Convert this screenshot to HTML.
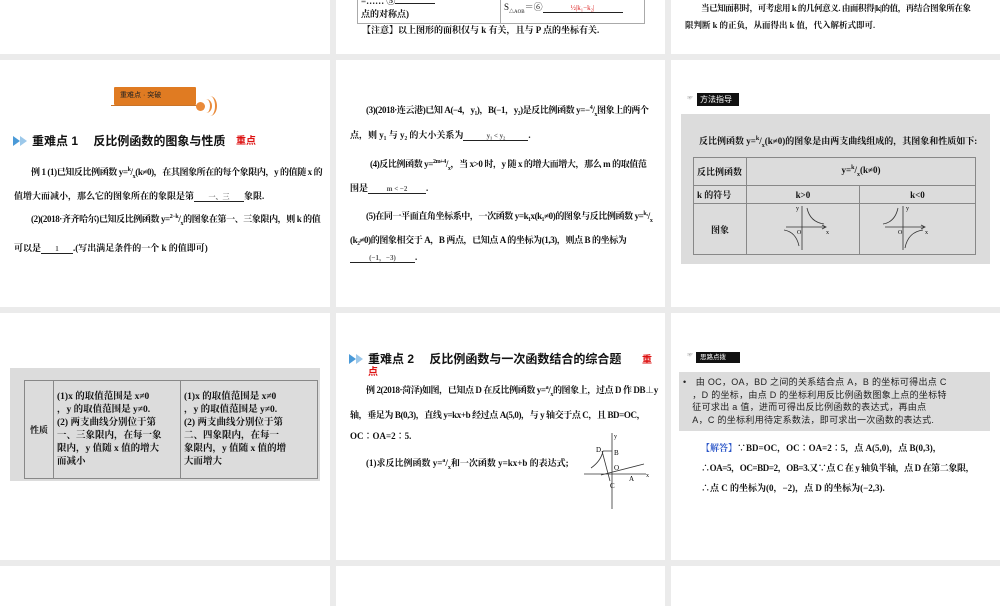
<!DOCTYPE html><html><head><meta charset="utf-8"><style>
body{margin:0;width:1000px;height:600px;background:#ebebeb;position:relative;overflow:hidden;font-family:"Liberation Serif","Noto Serif CJK SC",serif;color:#111}
.s{position:absolute;background:#fff;overflow:hidden}
.a{position:absolute;white-space:nowrap;font-size:9px;line-height:11px}
.l{letter-spacing:-0.4px}
.b{font-weight:bold}
.h{font-family:"Liberation Sans","Noto Sans CJK SC",sans-serif;font-weight:bold;font-size:12px;line-height:14px;letter-spacing:0}
.tri{position:absolute;width:0;height:0;border-top:5px solid transparent;border-bottom:5px solid transparent;border-left:7px solid #4a9ad8}
.u{display:inline-block;border-bottom:1px solid #222;text-align:center;font-size:7px;color:#555;vertical-align:baseline;line-height:8px}
table{border-collapse:collapse;position:absolute}
td{border:1px solid #888;font-size:9px;padding:0 3px}
sup,sub{font-size:6px}
</style></head><body>
<div class="s" style="left:0;top:0;width:330px;height:54px"></div>
<div class="s" style="left:336px;top:0;width:329px;height:54px">
 <div style="position:absolute;left:21px;top:-2px;width:286px;height:25px;border:1px solid #aaa;border-top:none"></div>
 <div style="position:absolute;left:164px;top:0;width:1px;height:23px;background:#aaa"></div>
 <div class="a b" style="left:25px;top:-4px">=…… ⑤<span class="u" style="width:40px"></span></div>
 <div class="a b" style="left:25px;top:9px">点的对称点)</div>
 <div class="a" style="left:168px;top:2px">S<sub style="font-size:5px">△AOB</sub>＝⑥<span class="u" style="width:80px;color:#d22">½|k₁−k₂|</span></div>
 <div class="a b" style="left:26px;top:25px">【注意】以上图形的面积仅与 k 有关，且与 P 点的坐标有关.</div>
</div>
<div class="s" style="left:671px;top:0;width:329px;height:54px">
 <div class="a b l" style="left:30px;top:3px;font-size:8.5px">当已知面积时，可考虑用 k 的几何意义. 由面积得|k|的值，再结合图象所在象</div>
 <div class="a b" style="left:14px;top:20px;font-size:8.5px">限判断 k 的正负，从而得出 k 值，代入解析式即可.</div>
</div>
<div class="s" style="left:0;top:60px;width:330px;height:247px">
 <div style="position:absolute;left:114px;top:27px;width:82px;height:18px;background:#e07b22;border-radius:1px"></div>
 <div class="a" style="left:120px;top:30px;font-size:7px;color:#222;font-family:'Liberation Sans','Noto Sans CJK SC',sans-serif">重难点 · 突破</div>
 <div style="position:absolute;left:111px;top:45px;width:90px;height:1px;background:#c9742a"></div>
 <div style="position:absolute;left:196px;top:42px;width:9px;height:9px;border-radius:50%;background:#e98a3a"></div>
 <div style="position:absolute;left:200px;top:39px;width:10px;height:14px;border-right:2px solid #e98a3a;border-radius:50%"></div>
 <div style="position:absolute;left:203px;top:36px;width:12px;height:20px;border-right:2px solid #e98a3a;border-radius:50%"></div>
 <div class="tri" style="left:13px;top:76px"></div><div class="tri" style="left:20px;top:76px;border-left-color:#9cc8ea"></div>
 <div class="a h" style="left:32px;top:74px">重难点 1　 反比例函数的图象与性质</div>
 <div class="a h" style="left:236px;top:75px;color:#d11;font-size:10px">重点</div>
 <div class="a b l" style="left:31px;top:105px">例 1 (1)已知反比例函数 y=<sup>k</sup>/<sub>x</sub>(k≠0)，在其图象所在的每个象限内，y 的值随 x 的</div>
 <div class="a b" style="left:14px;top:131px">值增大而减小，那么它的图象所在的象限是第<span class="u" style="width:50px">一、三</span>象限.</div>
 <div class="a b l" style="left:31px;top:152px">(2)(2018·齐齐哈尔)已知反比例函数 y=<sup>2−k</sup>/<sub>x</sub>的图象在第一、三象限内，则 k 的值</div>
 <div class="a b" style="left:14px;top:183px">可以是<span class="u" style="width:32px">1</span>.(写出满足条件的一个 k 的值即可)</div>
</div>
<div class="s" style="left:336px;top:60px;width:329px;height:247px">
 <div class="a b l" style="left:30px;top:43px">(3)(2018·连云港)已知 A(−4，y₁)，B(−1，y₂)是反比例函数 y=−<sup>4</sup>/<sub>x</sub>图象上的两个</div>
 <div class="a b" style="left:14px;top:70px">点，则 y₁ 与 y₂ 的大小关系为<span class="u" style="width:65px">y₁ &lt; y₂</span>.</div>
 <div class="a b l" style="left:34px;top:97px">(4)反比例函数 y=<sup>2m+4</sup>/<sub>x</sub>，当 x&gt;0 时，y 随 x 的增大而增大，那么 m 的取值范</div>
 <div class="a b" style="left:14px;top:123px">围是<span class="u" style="width:58px">m &lt; −2</span>.</div>
 <div class="a b l" style="left:30px;top:149px">(5)在同一平面直角坐标系中，一次函数 y=k₁x(k₁≠0)的图象与反比例函数 y=<sup>k₂</sup>/<sub>x</sub></div>
 <div class="a b l" style="left:14px;top:175px">(k₂≠0)的图象相交于 A，B 两点，已知点 A 的坐标为(1,3)，则点 B 的坐标为</div>
 <div class="a b" style="left:14px;top:192px"><span class="u" style="width:65px">(−1，−3)</span>.</div>
</div>
<div class="s" style="left:671px;top:60px;width:329px;height:247px">
 <div class="a" style="left:16px;top:34px;font-size:6px;color:#999">☞</div>
 <div style="position:absolute;left:26px;top:33px;width:42px;height:13px;background:#111"></div>
 <div class="a" style="left:29px;top:34px;color:#fff;font-size:8px;font-family:'Liberation Sans','Noto Sans CJK SC',sans-serif">方法指导</div>
 <div style="position:absolute;left:10px;top:54px;width:309px;height:150px;background:#dcdcdc"></div>
 <div class="a b" style="left:28px;top:74px">反比例函数 y=<sup>k</sup>/<sub>x</sub>(k≠0)的图象是由两支曲线组成的，其图象和性质如下:</div>
 <table style="left:22px;top:97px;width:283px;height:97px;background:#dcdcdc">
  <tr style="height:28px"><td class="b" style="width:46px">反比例函数</td><td colspan="2" class="b" style="text-align:center">y=<sup>k</sup>/<sub>x</sub>(k≠0)</td></tr>
  <tr style="height:18px"><td class="b">k 的符号</td><td class="b" style="text-align:center;width:106px">k&gt;0</td><td class="b" style="text-align:center">k&lt;0</td></tr>
  <tr><td class="b" style="text-align:center">图象</td>
  <td><svg width="106" height="48" viewBox="0 0 106 48"><path d="M36 23H76M72 21l4 2-4 2M52 2V46" stroke="#333" fill="none" stroke-width=".8"/><path d="M57 4Q60 18 74 20M34 26Q46 28 49 42" stroke="#333" fill="none" stroke-width=".8"/><text x="46" y="6" font-size="6">y</text><text x="76" y="30" font-size="6">x</text><text x="47" y="30" font-size="6">O</text></svg></td>
  <td><svg width="106" height="48" viewBox="0 0 106 48"><path d="M22 23H62M58 21l4 2-4 2M40 2V46" stroke="#333" fill="none" stroke-width=".8"/><path d="M35 4Q32 18 20 20M42 44Q45 28 60 26" stroke="#333" fill="none" stroke-width=".8"/><text x="43" y="6" font-size="6">y</text><text x="62" y="30" font-size="6">x</text><text x="35" y="30" font-size="6">O</text></svg></td></tr>
 </table>
</div>
<div class="s" style="left:0;top:313px;width:330px;height:247px">
 <div style="position:absolute;left:10px;top:55px;width:310px;height:113px;background:#dcdcdc"></div>
 <table style="left:24px;top:67px;width:294px;height:99px">
  <tr><td class="b" style="width:22px;text-align:center">性质</td>
  <td class="b" style="width:120px;line-height:13px;font-size:9.5px">(1)x 的取值范围是 x≠0<br>，y 的取值范围是 y≠0.<br>(2) 两支曲线分别位于第<br>一、三象限内，在每一象<br>限内，y 值随 x 值的增大<br>而减小</td>
  <td class="b" style="line-height:13px;font-size:9.5px">(1)x 的取值范围是 x≠0<br>，y 的取值范围是 y≠0.<br>(2) 两支曲线分别位于第<br>二、四象限内，在每一<br>象限内，y 值随 x 值的增<br>大而增大</td></tr>
 </table>
</div>
<div class="s" style="left:336px;top:313px;width:329px;height:247px">
 <div class="tri" style="left:13px;top:41px"></div><div class="tri" style="left:20px;top:41px;border-left-color:#9cc8ea"></div>
 <div class="a h" style="left:32px;top:39px">重难点 2　 反比例函数与一次函数结合的综合题</div>
 <div class="a h" style="left:306px;top:41px;color:#d11;font-size:10px">重</div>
 <div class="a h" style="left:32px;top:53px;color:#d11;font-size:10px">点</div>
 <div class="a b l" style="left:30px;top:70px">例 2(2018·菏泽)如图，已知点 D 在反比例函数 y=<sup>a</sup>/<sub>x</sub>的图象上，过点 D 作 DB⊥y</div>
 <div class="a b l" style="left:14px;top:97px">轴，垂足为 B(0,3)，直线 y=kx+b 经过点 A(5,0)，与 y 轴交于点 C，且 BD=OC，</div>
 <div class="a b" style="left:14px;top:118px">OC∶OA=2∶5.</div>
 <div class="a b" style="left:30px;top:143px">(1)求反比例函数 y=<sup>a</sup>/<sub>x</sub>和一次函数 y=kx+b 的表达式;</div>
 <svg style="position:absolute;left:245px;top:118px" width="70" height="80" viewBox="0 0 70 80"><path d="M3 43H65M31 2V78M22 20H31M21 20L29 50M20 44L63 33M10 37Q20 30 22 20" stroke="#333" fill="none" stroke-width=".8"/><text x="33" y="7" font-size="6">y</text><text x="15" y="21" font-size="7">D</text><text x="33" y="24" font-size="7">B</text><text x="33" y="39" font-size="7">O</text><text x="65" y="46" font-size="6">x</text><text x="48" y="50" font-size="7">A</text><text x="29" y="57" font-size="7">C</text></svg>
</div>
<div class="s" style="left:671px;top:313px;width:329px;height:247px">
 <div class="a" style="left:16px;top:38px;font-size:6px;color:#999">☞</div>
 <div style="position:absolute;left:25px;top:39px;width:44px;height:11px;background:#111"></div>
 <div class="a" style="left:29px;top:39px;color:#fff;font-size:6.5px;font-family:'Liberation Sans','Noto Sans CJK SC',sans-serif">思路点拨</div>
 <div style="position:absolute;left:8px;top:59px;width:311px;height:59px;background:#dcdcdc"></div>
 <div class="a" style="left:12px;top:63px;font-family:'Liberation Sans','Noto Sans CJK SC',sans-serif;line-height:12.5px;font-size:9px;letter-spacing:0.3px;color:#222">•　由 OC，OA，BD 之间的关系结合点 A，B 的坐标可得出点 C<br>　，D 的坐标，由点 D 的坐标利用反比例函数图象上点的坐标特<br>　征可求出 a 值，进而可得出反比例函数的表达式，再由点<br>　A，C 的坐标利用待定系数法，即可求出一次函数的表达式.</div>
 <div class="a b" style="left:30px;top:130px"><span style="color:#2b56c8">【解答】</span>∵BD=OC，OC∶OA=2∶5，点 A(5,0)，点 B(0,3)，</div>
 <div class="a b l" style="left:30px;top:150px">∴OA=5，OC=BD=2，OB=3.又∵点 C 在 y 轴负半轴，点 D 在第二象限，</div>
 <div class="a b" style="left:30px;top:170px">∴点 C 的坐标为(0，−2)，点 D 的坐标为(−2,3).</div>
</div>
<div class="s" style="left:0;top:566px;width:330px;height:40px"></div>
<div class="s" style="left:336px;top:566px;width:329px;height:40px"></div>
<div class="s" style="left:671px;top:566px;width:329px;height:40px"></div>
</body></html>
